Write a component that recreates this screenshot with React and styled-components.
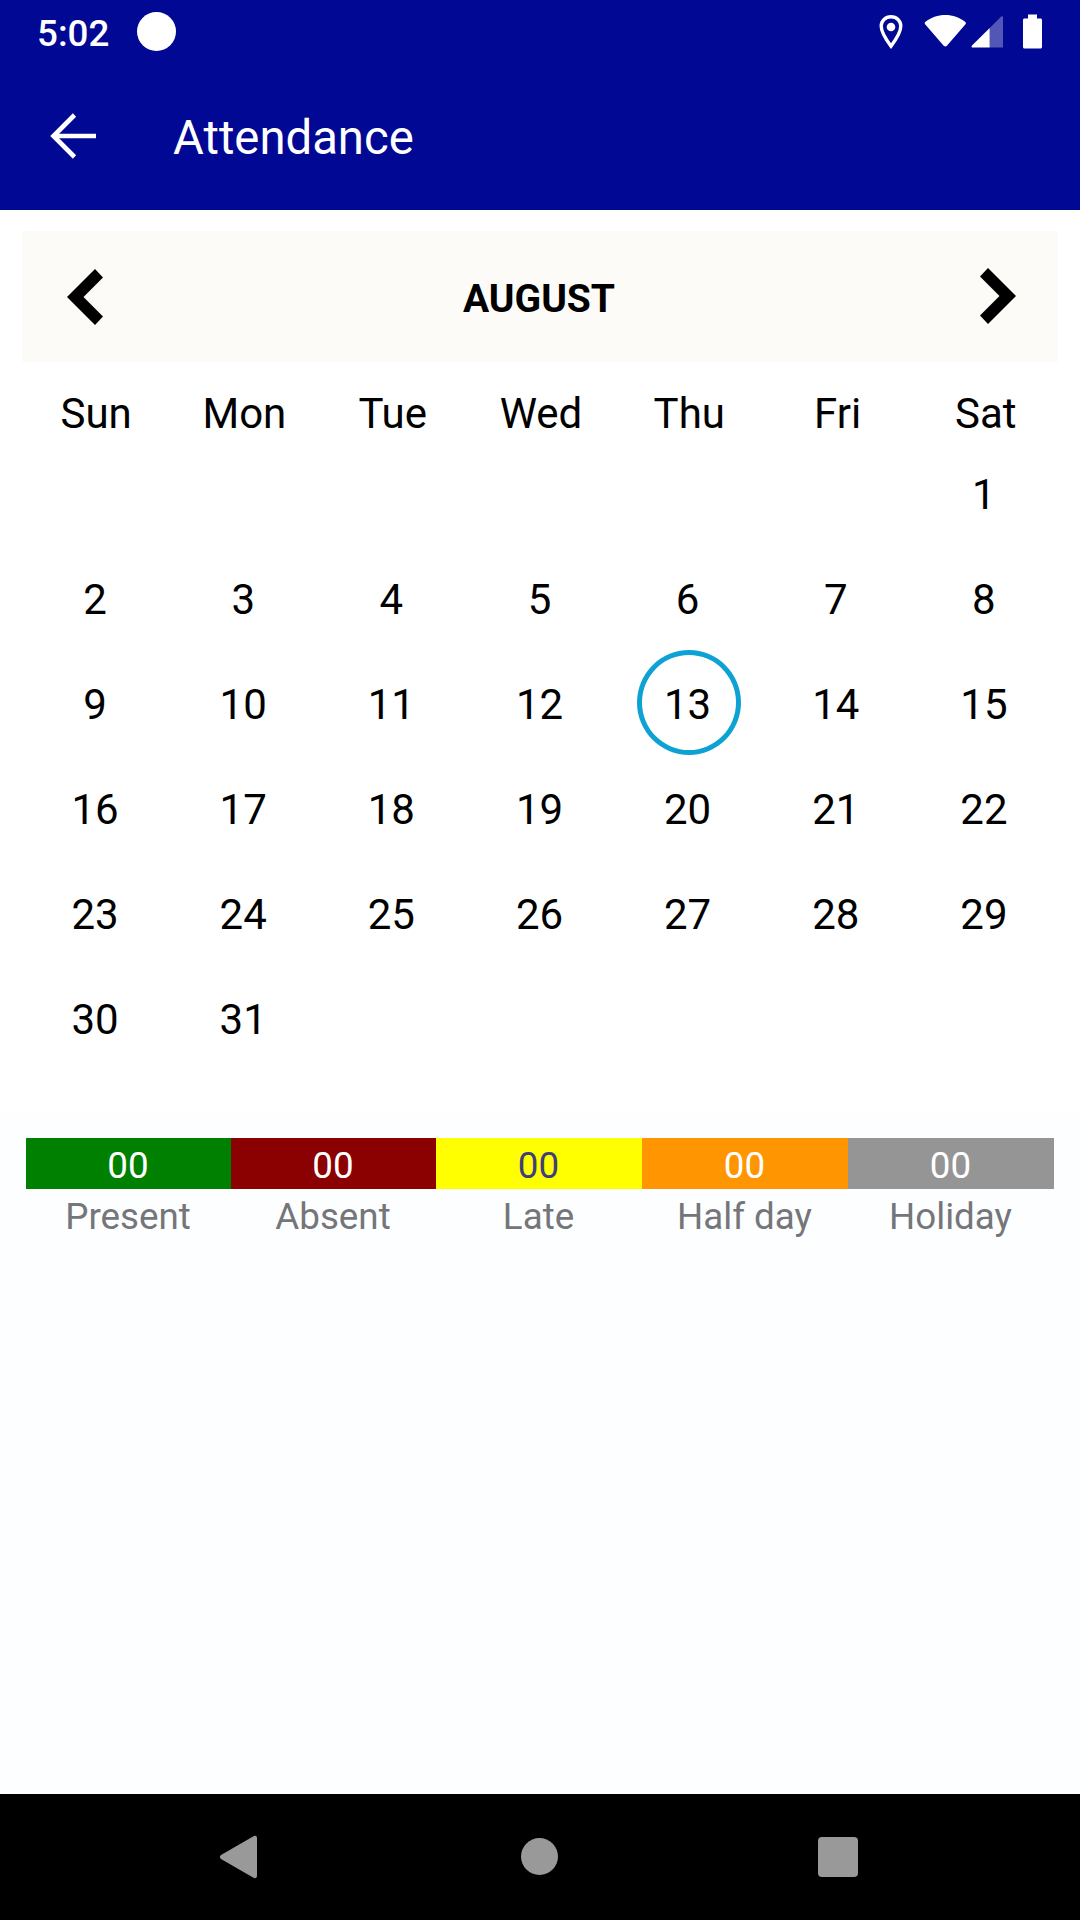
import React from "react";
import styled, { createGlobalStyle } from "styled-components";

const GlobalStyle = createGlobalStyle`
  * {
    box-sizing: border-box;
  }

  body {
    margin: 0;
    font-family: Roboto, "Noto Sans", sans-serif;
  }
`;

const Screen = styled.div`
  display: flex;
  flex-direction: column;
  width: 1080px;
  height: 1920px;
  background: #fdfeff;
  overflow: hidden;
`;

// Status bar
const StatusBar = styled.div`
  display: flex;
  align-items: center;
  height: 63px;
  padding: 0 37px 0 37px;
  background: #010893;
  color: #fff;
`;

const Clock = styled.span`
  font-size: 36.75px;
  font-weight: 500;
  line-height: 42px;
  margin-top: 4px;
`;

const Notification = styled.span`
  width: 39px;
  height: 39px;
  margin-left: 28px;
  border-radius: 50%;
  background: #fff;
`;

const StatusIcons = styled.div`
  display: flex;
  margin-left: auto;
`;

// App bar
const AppBar = styled.header`
  display: flex;
  align-items: center;
  height: 147px;
  padding-left: 48px;
  background: #010893;
  color: #fff;
`;

const BackButton = styled.button`
  display: flex;
  margin-bottom: 1px;
  padding: 0;
  border: none;
  background: none;
  color: inherit;
`;

const Title = styled.h1`
  margin: 3px 0 0 75px;
  font-size: 47.25px;
  font-weight: 400;
  line-height: 56px;
`;

// Calendar
const Calendar = styled.section`
  height: 903px;
  padding: 21px 22px 0;
  background: #fff;
`;

const MonthBar = styled.div`
  display: flex;
  justify-content: space-between;
  align-items: center;
  height: 131px;
  padding: 0 42px 0 45px;
  background: #fcfbf8;
`;

const MonthButton = styled.button`
  display: flex;
  padding: 0;
  border: none;
  background: none;
`;

const MonthName = styled.h2`
  margin: 4px 5px 0 0;
  font-size: 39px;
  font-weight: 700;
  line-height: 46px;
  color: #000;
`;

const Week = styled.div`
  display: grid;
  grid-template-columns: repeat(7, 1fr);
  margin-left: -1px;
`;

const WeekDays = styled(Week)`
  height: 79px;
  margin: 0 -2px 0 0;
  padding-top: 27px;
`;

const WeekDay = styled.span`
  font-size: 42px;
  line-height: 49px;
  text-align: center;
  color: #000;
`;

const Day = styled.div`
  position: relative;
  height: 105px;
  padding-top: 29px;
  font-size: 42px;
  line-height: 49px;
  text-align: center;
  color: #000;
`;

const TodayRing = styled.span`
  position: absolute;
  top: -1px;
  left: 50%;
  width: 104px;
  height: 105px;
  margin-left: -51px;
  border: 5px solid #0ea2d4;
  border-radius: 50%;
`;

// Totals under the calendar
const Summary = styled.section`
  display: grid;
  grid-template-columns: 205px 205px 206px 206px 206px;
  padding: 25px 26px 0;
`;

const SummaryItem = styled.div`
  text-align: center;
  font-size: 36.75px;
`;

const Count = styled.div`
  height: 51px;
  padding: 6px 1px 0 0;
  line-height: 43px;
  background: ${(props) => props.$bg};
  color: ${(props) => props.$color || "#fff"};
`;

const Label = styled.div`
  padding: 6px 1px 0 0;
  line-height: 43px;
  color: #757679;
`;

// Android navigation
const NavBar = styled.nav`
  display: flex;
  align-items: center;
  height: 126px;
  margin-top: auto;
  padding-left: 219px;
  background: #000;
`;

const NavIcon = styled.svg`
  margin-left: ${(props) => props.$gap || 0}px;
  fill: #999;
`;

const HomeIcon = styled(NavIcon)`
  margin-bottom: 1px;
`;

const weekDays = ["Sun", "Mon", "Tue", "Wed", "Thu", "Fri", "Sat"];
const firstDay = 6;
const today = 13;

const weeks = Array.from({ length: 6 }, (_, w) =>
  Array.from({ length: 7 }, (_, d) => {
    const day = w * 7 + d - firstDay + 1;
    return day > 0 && day <= 31 ? day : null;
  })
);

const summary = [
  { label: "Present", bg: "#008000" },
  { label: "Absent", bg: "#8b0000" },
  { label: "Late", bg: "#ffff00", color: "#3f3f78" },
  { label: "Half day", bg: "#ff9500" },
  { label: "Holiday", bg: "#959595" },
];

function App() {
  return (
    <>
      <GlobalStyle />
      <Screen>
        <StatusBar>
          <Clock>5:02</Clock>
          <Notification />
          <StatusIcons>
            <svg width="164" height="36" viewBox="0 0 164 36" fill="#fff">
              {/* location */}
              <path
                d="M12 2.7c-5.6 0-9.8 4.1-9.8 9.4C2.2 19 8.6 27.700 12 32.200c3.400-4.500 9.800-13.200 9.800-20.100 0-5.300-4.200-9.400-9.800-9.400z"
                fill="none"
                stroke="#fff"
                strokeWidth="3.400"
              />
              <circle cx="12" cy="13" r="4.300" />
              {/* wifi */}
              <path d="M46.500 7.800C52 3.600 58.800 1 66.300 1s14.300 2.600 19.800 6.800c.9.700 1 1.600.4 2.400L67.900 31.800c-.9 1-2.300 1-3.200 0L46.100 10.200c-.6-.8-.5-1.700.4-2.400z" />
              {/* signal */}
              <path d="M110.700 14L122 2.700c.9-.9 2-.4 2 .8v30h-13.300z" fillOpacity="0.320" />
              <path d="M110.700 14v19.500H93.800c-1.300 0-1.700-1.200-.8-2.100z" />
              {/* battery */}
              <path d="M149 0.500h9v4h3.500c.9 0 1.500.6 1.500 1.500v27c0 .9-.6 1.500-1.500 1.500h-16c-.9 0-1.500-.6-1.500-1.500V6c0-.9.600-1.500 1.500-1.500h3.500z" />
            </svg>
          </StatusIcons>
        </StatusBar>

        <AppBar>
          <BackButton aria-label="Back">
            <svg width="50" height="50" viewBox="0 0 50 50" fill="none" stroke="#fff" strokeWidth="4.600">
              <path d="M26.500 4l-21 21 21 21M6 25h42" />
            </svg>
          </BackButton>
          <Title>Attendance</Title>
        </AppBar>

        <Calendar>
          <MonthBar>
            <MonthButton aria-label="Previous month">
              <svg width="36" height="56" viewBox="0 0 36 56">
                <path d="M28 0l8 8.500L16.500 28 36 47.500 28 56 0 28z" />
              </svg>
            </MonthButton>
            <MonthName>AUGUST</MonthName>
            <MonthButton aria-label="Next month">
              <svg width="36" height="58" viewBox="0 0 36 58">
                <path d="M8 0L0 8.500 19.500 28 0 47.500 8 56l28-28z" />
              </svg>
            </MonthButton>
          </MonthBar>

          <WeekDays>
            {weekDays.map((name) => (
              <WeekDay key={name}>{name}</WeekDay>
            ))}
          </WeekDays>

          {weeks.map((days, w) => (
            <Week key={w}>
              {days.map((day, d) => (
                <Day key={d}>
                  {day}
                  {day === today && <TodayRing />}
                </Day>
              ))}
            </Week>
          ))}
        </Calendar>

        <Summary>
          {summary.map((item) => (
            <SummaryItem key={item.label}>
              <Count $bg={item.bg} $color={item.color}>
                00
              </Count>
              <Label>{item.label}</Label>
            </SummaryItem>
          ))}
        </Summary>

        <NavBar>
          <NavIcon width="38" height="44" viewBox="0 0 38 44">
            <path d="M34.500 1.200C36.200.3 38 1 38 3v38c0 2-1.800 2.700-3.500 1.800L2 24c-1.500-1-1.500-3 0-4z" />
          </NavIcon>
          <HomeIcon $gap={264} width="37" height="37" viewBox="0 0 37 37">
            <circle cx="18.500" cy="18.500" r="18.500" />
          </HomeIcon>
          <NavIcon $gap={260} width="40" height="40" viewBox="0 0 40 40">
            <rect width="40" height="40" rx="4" />
          </NavIcon>
        </NavBar>
      </Screen>
    </>
  );
}

export default App;
